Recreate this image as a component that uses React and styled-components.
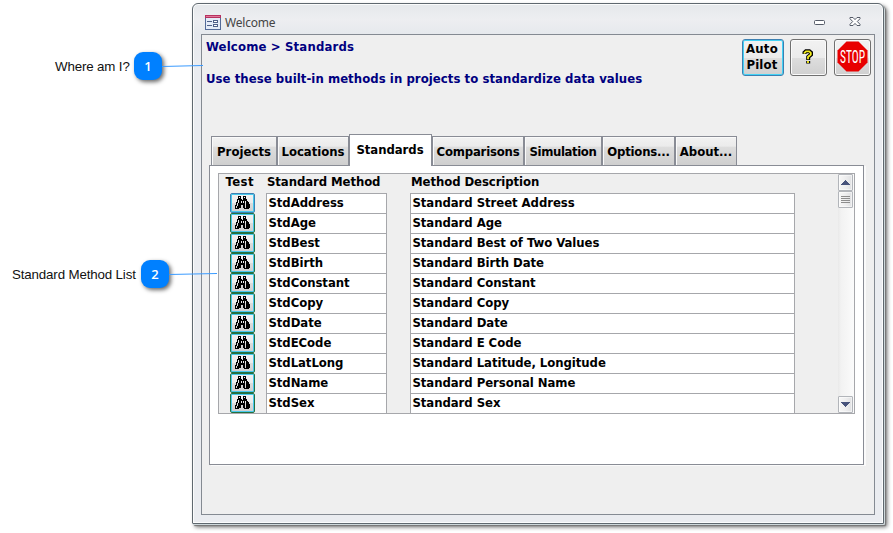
import React from 'react';
import styled, { createGlobalStyle, css } from 'styled-components';

const Global = createGlobalStyle`
  * { box-sizing: border-box; }
  body { margin: 0; background: #fff; overflow: hidden; }
`;

const uiFont = css`
  font-family: 'DejaVu Sans Condensed', 'DejaVu Sans', sans-serif;
  font-stretch: condensed;
  font-weight: bold;
  font-size: 13px;
`;

const Page = styled.div`
  position: relative;
  width: 893px;
  height: 533px;
  padding: 3px 0 0 192px;
  overflow: hidden;
`;

const Window = styled.section`
  width: 692px;
  height: 521px;
  border: 1px solid #5f686f;
  border-radius: 6px 6px 1px 1px;
  background: linear-gradient(#e5e8eb, #edeef1 15px, #e6e9ed 30px, #eaecf0 60px);
  box-shadow: inset 0 0 0 1px #fbfcfc, 1px 1px 0 #cfd9dc, 2px 2px 1px #777, 3px 3px 4px rgba(0, 0, 0, 0.6);
  padding: 0 8px 8px;
  display: flex;
  flex-direction: column;
`;

const TitleBar = styled.header`
  height: 30px;
  flex: none;
  display: flex;
  align-items: center;
  padding: 6px 13px 0 4px;
`;

const Title = styled.span`
  flex: 1;
  margin-left: 4px;
  font: 12px 'Noto Sans', sans-serif;
  letter-spacing: -0.2px;
  color: #454545;
`;

const WindowControls = styled.div`
  display: flex;
  align-items: center;
  gap: 24px;
  padding-right: 1px;
  margin-top: -1px;
`;

const Client = styled.main`
  flex: 1;
  border: 1px solid #848a92;
  background: #efefef;
  padding: 4px 3px 0 4px;
`;

const Banner = styled.div`
  display: flex;
  justify-content: space-between;
  height: 95px;
`;

const Headings = styled.div`
  ${uiFont}
  color: #000080;
  line-height: 16px;
`;

const Breadcrumb = styled.h1`
  margin: 0 0 16px;
  font: inherit;
  letter-spacing: 0.16px;
`;

const Hint = styled.p`
  margin: 0;
  letter-spacing: 0.055px;
`;

const Actions = styled.div`
  display: flex;
  gap: 7px;
`;

const ActionButton = styled.button`
  ${uiFont}
  line-height: 16px;
  width: ${(p) => (p.$active ? 42 : 37)}px;
  height: 37px;
  padding: ${(p) => (p.$active ? '0 2px 2px 0' : '0 1px 2px 0')};
  letter-spacing: 0.2px;
  display: flex;
  align-items: center;
  justify-content: center;
  color: #000;
  border: 1px solid ${(p) => (p.$active ? '#3c7fb1' : '#707070')};
  border-radius: 3px;
  background: linear-gradient(#f2f2f2, #ebebeb 50%, #dedede 50%, #d0d0d0);
  box-shadow: inset 0 0 0 1px ${(p) => (p.$active ? '#43d2f5' : '#fafafa')};
  &:nth-child(2) { margin-left: -1px; }
`;

const Tabs = styled.nav`
  display: flex;
  align-items: flex-end;
  padding-left: 5px;
  height: 31px;
`;

const Tab = styled.div`
  ${uiFont}
  width: ${(p) => p.$w}px;
  height: ${(p) => (p.$selected ? 32 : 29)}px;
  margin-bottom: ${(p) => (p.$selected ? -1 : 0)}px;
  flex: none;
  display: flex;
  align-items: center;
  justify-content: center;
  padding: ${(p) => (p.$selected ? '0 1px 2px 0' : '0')};
  letter-spacing: ${(p) => p.$tracking}px;
  white-space: nowrap;
  color: #000;
  border: 1px solid #898c95;
  border-bottom: 0;
  position: relative;
  z-index: ${(p) => (p.$selected ? 1 : 0)};
  background: ${(p) => (p.$selected ? '#fff' : 'linear-gradient(#f2f2f2, #ebebeb 33%, #dddddd 36%, #cfcfcf)')};
  box-shadow: ${(p) => (p.$selected ? 'none' : 'inset 1px 1px 0 #fafafa')};
`;

const TabPanel = styled.div`
  width: 655px;
  height: 300px;
  margin-left: 3px;
  padding: 7px 8px;
  border: 1px solid #898c95;
  background: #fff;
  box-shadow: 2px 1px 0 #fafafa;
`;

const MethodForm = styled.div`
  width: 637px;
  height: 241px;
  border: 1px solid #a6a7ab;
  background: #efefef;
  display: flex;
  justify-content: space-between;
`;

const MethodTable = styled.div`
  ${uiFont}
  display: grid;
  grid-template-columns: 25px 11px 121px 23px 385px;
  grid-template-rows: 19px;
  grid-auto-rows: 20px;
  padding-left: 11px;
  justify-content: start;
  color: #000;
  height: 239px;
  overflow: hidden;
`;

const ColumnHead = styled.div`
  grid-column: ${(p) => p.$col};
  line-height: 16px;
  padding-left: 1px;
  margin-left: ${(p) => (p.$col === 1 ? -5.6 : 0)}px;
  letter-spacing: ${(p) => (p.$col === 1 ? 0.5 : -0.08)}px;
  white-space: nowrap;
`;

const Cell = styled.div`
  grid-column: ${(p) => p.$col};
  border: 1px solid #a6a7ab;
  border-bottom: 0;
  background: #fff;
  line-height: 18px;
  padding-left: 1.4px;
  letter-spacing: -0.05px;
  white-space: nowrap;
`;

const TestButton = styled.button`
  grid-column: 1;
  padding: 0 1px 1px 0;
  height: 20px;
  display: flex;
  align-items: center;
  justify-content: center;
  border: 1px solid ${(p) => (p.$focused ? '#3c7fb1' : '#24703f')};
  border-radius: 2px;
  background: linear-gradient(#f2f2f2, #ebebeb 50%, #dddddd 50%, #cfcfcf);
  box-shadow: inset 0 0 0 1px #48c9ee;
`;

const ScrollBar = styled.div`
  width: 16px;
  height: 239px;
  padding-right: 1px;
  display: flex;
  flex-direction: column;
  background: linear-gradient(90deg, #e9e9e9, #f2f2f2 3px, #fbfbfb);
`;

const ScrollButton = styled.div`
  width: 15px;
  height: 17px;
  margin-top: ${(p) => (p.$end ? 'auto' : 0)};
  border: 1px solid #b2b5ba;
  border-radius: 1px;
  display: flex;
  align-items: center;
  justify-content: center;
  background: linear-gradient(90deg, #f7f7f7, #eeeeef 50%, #dfe0e2);
  box-shadow: inset 0 0 0 1px rgba(255, 255, 255, 0.5);
`;

const Callout = styled.div`
  position: absolute;
  left: ${(p) => p.$x}px;
  top: ${(p) => p.$y}px;
  display: flex;
  align-items: center;
  font: 13.33px 'Liberation Sans', Arial, sans-serif;
  color: #111;
  white-space: nowrap;
`;

const CalloutLabel = styled.span`
  width: ${(p) => p.$w}px;
  letter-spacing: -0.15px;
`;

const Badge = styled.span`
  width: 28px;
  height: 28px;
  border-radius: 9px;
  background: #0080ff;
  color: #fff;
  display: flex;
  align-items: center;
  justify-content: center;
  font: 600 13px 'Open Sans', sans-serif;
  box-shadow: 2px 2px 4px rgba(0, 0, 0, 0.6);
`;

const Lead = styled.svg`
  display: block;
  height: 4px;
`;

const BINOCULARS = [
  '...###..###....',
  '...#.#..#.#....',
  '...###..###....',
  '..#####.####...',
  '..#.########...',
  '..#.##.#.#.##..',
  '.##.##.#.#.###.',
  '.#.#######.###.',
  '.#.#######.####',
  '##.###..##.####',
  '#.####..##.####',
  '#.####..##.####',
  '####.....#####.',
];

const Binoculars = () => (
  <svg width="15" height="13" shapeRendering="crispEdges">
    {BINOCULARS.flatMap((row, y) =>
      [...row].map((c, x) => (c === '#' ? <rect key={`${x}-${y}`} x={x} y={y} width="1" height="1" /> : null))
    )}
  </svg>
);

const FormIcon = () => (
  <svg width="16" height="15" shapeRendering="crispEdges">
    <rect x="0.5" y="0.5" width="15" height="14" fill="#e4ebf7" stroke="#536a98" />
    <rect width="16" height="3" fill="#b83260" />
    <rect x="1" y="1" width="14" height="1" fill="#e0789a" />
    <path d="M2 6.5h5M2 10.5h5" stroke="#4f6088" />
    <path d="M8.5 5.5h4v2h-4zM8.5 9.5h4v2h-4z" fill="#fff" stroke="#4f6088" />
  </svg>
);

const MinimizeIcon = () => (
  <svg width="11" height="7">
    <rect x="0.5" y="2.5" width="10" height="4" rx="1" fill="#fff" stroke="#545b68" />
  </svg>
);

const CloseIcon = () => (
  <svg width="12" height="9">
    <path
      d="M1 .5h3L6 2.6 8 .5h3v1.2L8.3 4.5 11 7.3v1.2H8L6 6.4 4 8.5H1V7.3l2.7-2.8L1 1.7z"
      fill="#fff"
      stroke="#545b68"
    />
  </svg>
);

const HelpIcon = () => (
  <svg width="12" height="16">
    <path d="M2.5 5V3.7L4 2.2h3.3L9 3.7v1.8L6.2 8v3M6.2 12v2.4" fill="none" stroke="#000" strokeWidth="4" />
    <path d="M2.5 4.8V3.8L4 2.3h3.2L8.8 3.8v1.7L6 8v2.3M6 12v1.9" fill="none" stroke="#f4ed1d" strokeWidth="1.8" />
  </svg>
);

const StopSign = styled.svg`
  display: block;
  overflow: visible;
`;

const StopIcon = () => (
  <StopSign width="31" height="31">
    <path d="M9.5.5h12l9 9v12l-9 9h-12l-9-9v-12z" fill="#e80000" />
    <text
      x="3"
      y="22"
      fill="#fff"
      fontFamily="Roboto, sans-serif"
      fontSize="19"
      fontWeight="400"
      letterSpacing="0"
      textLength="25"
      lengthAdjust="spacingAndGlyphs"
    >
      STOP
    </text>
  </StopSign>
);

const Arrow = ({ down }) => (
  <svg width="9" height="5" shapeRendering="crispEdges">
    <path d={down ? 'M0 0h9v1H8v1H7v1H6v1H5v1H4V4H3V3H2V2H1V1H0z' : 'M0 5h9V4H8V3H7V2H6V1H5V0H4v1H3v1H2v1H1v1H0z'} fill="#48547c" />
  </svg>
);

const Grip = () => (
  <svg width="9" height="8" shapeRendering="crispEdges">
    <path d="M0 .5h9M0 2.5h9M0 4.5h9M0 6.5h9" stroke="#8d8d8d" />
  </svg>
);

const tabs = [
  { name: 'Projects', width: 66, tracking: 0.02 },
  { name: 'Locations', width: 72, tracking: -0.05 },
  { name: 'Standards', width: 83, tracking: -0.05, selected: true },
  { name: 'Comparisons', width: 92, tracking: -0.2 },
  { name: 'Simulation', width: 78, tracking: -0.4 },
  { name: 'Options...', width: 73, tracking: -0.22 },
  { name: 'About...', width: 62, tracking: -0.05 },
];

const methods = [
  ['StdAddress', 'Standard Street Address'],
  ['StdAge', 'Standard Age'],
  ['StdBest', 'Standard Best of Two Values'],
  ['StdBirth', 'Standard Birth Date'],
  ['StdConstant', 'Standard Constant'],
  ['StdCopy', 'Standard Copy'],
  ['StdDate', 'Standard Date'],
  ['StdECode', 'Standard E Code'],
  ['StdLatLong', 'Standard Latitude, Longitude'],
  ['StdName', 'Standard Personal Name'],
  ['StdSex', 'Standard Sex'],
];

export default function App() {
  return (
    <Page>
      <Global />
      <Window>
        <TitleBar>
          <FormIcon />
          <Title>Welcome</Title>
          <WindowControls>
            <MinimizeIcon />
            <CloseIcon />
          </WindowControls>
        </TitleBar>
        <Client>
          <Banner>
            <Headings>
              <Breadcrumb>Welcome &gt; Standards</Breadcrumb>
              <Hint>Use these built-in methods in projects to standardize data values</Hint>
            </Headings>
            <Actions>
              <ActionButton $active>Auto<br />Pilot</ActionButton>
              <ActionButton><HelpIcon /></ActionButton>
              <ActionButton><StopIcon /></ActionButton>
            </Actions>
          </Banner>
          <Tabs>
            {tabs.map(({ name, width, tracking, selected }) => (
              <Tab key={name} $w={width} $tracking={tracking} $selected={selected}>{name}</Tab>
            ))}
          </Tabs>
          <TabPanel>
            <MethodForm>
              <MethodTable>
                <ColumnHead $col={1}>Test</ColumnHead>
                <ColumnHead $col={3}>Standard Method</ColumnHead>
                <ColumnHead $col={5}>Method Description</ColumnHead>
                {methods.map(([name, description], i) => (
                  <React.Fragment key={name}>
                    <TestButton $focused={i === 0}><Binoculars /></TestButton>
                    <Cell $col={3}>{name}</Cell>
                    <Cell $col={5}>{description}</Cell>
                  </React.Fragment>
                ))}
              </MethodTable>
              <ScrollBar>
                <ScrollButton><Arrow /></ScrollButton>
                <ScrollButton><Grip /></ScrollButton>
                <ScrollButton $end><Arrow down /></ScrollButton>
              </ScrollBar>
            </MethodForm>
          </TabPanel>
        </Client>
      </Window>
      <Callout $x={55} $y={52}>
        <CalloutLabel $w={79}>Where am I?</CalloutLabel>
        <Badge>1</Badge>
        <Lead width="41"><path d="M0 2.5L41 1.5" stroke="#3b9bff" strokeWidth="1.2" /></Lead>
      </Callout>
      <Callout $x={12} $y={260}>
        <CalloutLabel $w={129}>Standard Method List</CalloutLabel>
        <Badge>2</Badge>
        <Lead width="48"><path d="M0 2.5L48 1.5" stroke="#3b9bff" strokeWidth="1.2" /></Lead>
      </Callout>
    </Page>
  );
}
